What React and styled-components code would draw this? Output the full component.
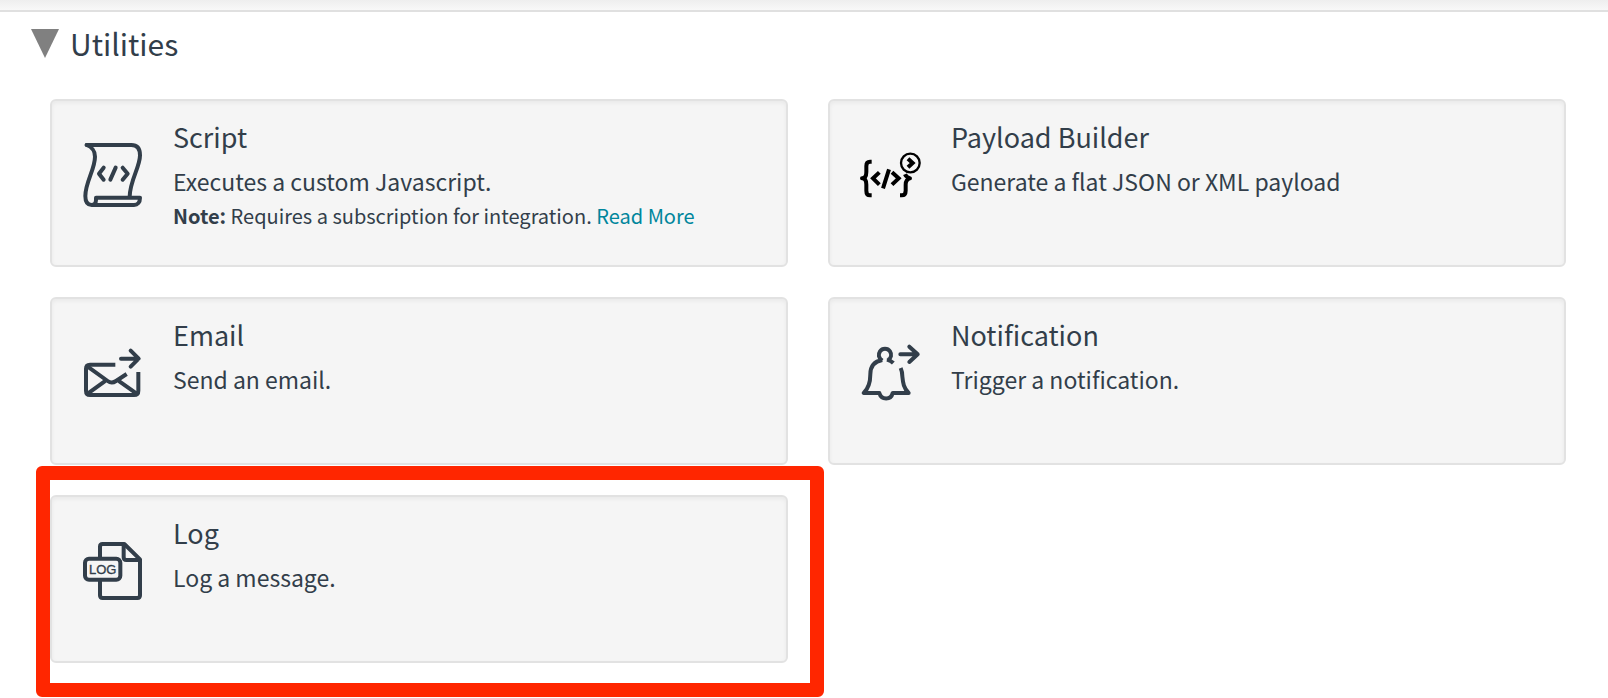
import React, { useState } from "react";
import styled, { createGlobalStyle } from "styled-components";

const ink = "#323e4a";

const GlobalStyle = createGlobalStyle`
  * { box-sizing: border-box; }
  body {
    margin: 0;
    background: #fff;
    color: ${ink};
    font-family: "Noto Sans CJK SC", "Noto Sans", sans-serif;
  }
`;

const TopBar = styled.div`
  height: 12px;
  border-bottom: 2px solid #e0e0e0;
  background: linear-gradient(#eeeeee, #f8f8f8);
`;

const Section = styled.section`
  padding: 8px 42px 0 50px;
`;

const SectionTitle = styled.h2`
  margin: 0 0 33px -19px;
  font-size: 30px;
  line-height: 46px;
  font-weight: 400;
`;

const Toggle = styled.button`
  display: flex;
  align-items: center;
  gap: 11px;
  padding: 0;
  border: 0;
  background: none;
  color: inherit;
  font: inherit;
  cursor: pointer;
`;

const Arrow = styled.svg`
  width: 28px;
  height: 29px;
  fill: #808080;
  transform: ${(p) => (p.$open ? "none" : "rotate(-90deg)")};
`;

const Grid = styled.div`
  display: grid;
  grid-template-columns: 1fr 1fr;
  gap: 30px 40px;
  padding-bottom: 35px;
`;

const Card = styled.article`
  position: relative;
  display: flex;
  gap: 23px;
  min-height: 168px;
  padding: 16px 26px;
  border: 2px solid #e2e2e2;
  border-radius: 6px;
  background: #f5f5f5;
  box-shadow: inset 0 2px 4px rgba(0, 0, 0, 0.05);
`;

const Icon = styled.svg`
  flex: none;
  width: 72px;
  height: 72px;
  margin-top: 22px;
  fill: none;
  stroke: ${(p) => p.$color || ink};
  stroke-width: 12;
  stroke-linecap: round;
  stroke-linejoin: round;
`;

const Ring = styled.circle`
  stroke-width: 7;
`;

const IconText = styled.text`
  font: 400 39px "Liberation Sans", sans-serif;
  fill: ${ink};
  stroke: ${ink};
  stroke-width: 1;
`;

const CardTitle = styled.h3`
  margin: 0 0 6px;
  font-size: 27px;
  line-height: 40px;
  font-weight: 400;
`;

const Description = styled.p`
  margin: 0;
  font-size: 23px;
  line-height: 36px;
`;

const Note = styled.p`
  margin: 0;
  font-size: 20px;
  line-height: 34px;
`;

const Link = styled.a`
  color: #00869c;
  text-decoration: none;
`;

const Highlight = styled.div`
  position: absolute;
  inset: -31px -38px -36px -16px;
  border: 14px solid #ff2600;
  border-radius: 6px;
  pointer-events: none;
`;

const ScriptIcon = () => (
  <Icon viewBox="24 27 216 216" aria-hidden="true">
    <path d="M50 45H184C202 45 210 56 210 76C210 112 180 150 179 200" />
    <path d="M50 45C66 51 75 62 75 80C75 118 46 156 46 198C46 215 52 225 65 225H192C203 225 210 217 210 203H78V210C78 218 73 225 65 225" />
    <path d="M101 113L87 131L101 149M137 113L121 149M158 113L173 131L158 149" />
  </Icon>
);

const PayloadIcon = () => (
  <Icon viewBox="18 -3 216 216" aria-hidden="true" $color="#000">
    <path
      strokeLinecap="butt"
      d="M65 65H60C52 65 49 70 49 78V96C49 108 44 115 36 115C44 115 49 122 49 134V152C49 161 52 166 60 166H65"
    />
    <path strokeLinecap="butt" strokeLinejoin="miter" d="M88 97L69 115L88 134M117 88L99 145M126 97L146 115L126 134" />
    <path strokeLinecap="butt" d="M150 166H155C164 166 167 161 167 152V134C167 123 171 117 180 115C171 112 167 108 165 103" />
    <Ring cx="181" cy="69" r="28" />
    <path strokeLinecap="butt" strokeLinejoin="miter" d="M174 56L188 69L174 82" />
  </Icon>
);

const EmailIcon = () => (
  <Icon viewBox="24 6 216 216" aria-hidden="true">
    <path
      strokeLinecap="butt"
      d="M136 89H60C52 89 48 94 48 101V167C48 175 52 180 60 180H192C200 180 205 175 205 167V111"
    />
    <path strokeLinecap="butt" d="M52 94L113 138Q125 147 138 138L170 117" />
    <path d="M53 176L104 139M200 176L148 139" />
    <path d="M153 71H205M182 47L206 71L182 95" />
  </Icon>
);

const BellIcon = () => (
  <Icon viewBox="18 6 216 216" aria-hidden="true">
    <path
      strokeLinecap="butt"
      d="M97 77C85 69 84 58 90 49C97 39 113 39 120 49C126 58 124 69 113 77M97 75C72 79 61 95 61 118C61 147 54 162 41 174H88C94 196 123 196 128 174H176C161 160 159 144 157 124C157 116 156 108 152 99M111 74C118 76 125 79 130 84"
    />
    <path d="M151 58H203M178 35L203 58L178 81" />
  </Icon>
);

const LogIcon = () => (
  <Icon viewBox="24 15 216 216" aria-hidden="true">
    <path strokeLinecap="butt" d="M90 82V50Q90 42 98 42H163L210 88V196Q210 204 202 204H98Q90 204 90 196V150" />
    <path d="M161 44V82Q161 90 169 90H208" />
    <rect x="45" y="86" width="106" height="63" rx="12" />
    <IconText x="98" y="131" textAnchor="middle">
      LOG
    </IconText>
  </Icon>
);

const utilities = [
  {
    title: "Script",
    icon: ScriptIcon,
    text: "Executes a custom Javascript.",
    note: "Requires a subscription for integration.",
  },
  { title: "Payload Builder", icon: PayloadIcon, text: "Generate a flat JSON or XML payload" },
  { title: "Email", icon: EmailIcon, text: "Send an email." },
  { title: "Notification", icon: BellIcon, text: "Trigger a notification." },
  { title: "Log", icon: LogIcon, text: "Log a message.", highlighted: true },
];

function UtilityCard({ title, icon: Glyph, text, note, highlighted }) {
  return (
    <Card>
      <Glyph />
      <div>
        <CardTitle>{title}</CardTitle>
        <Description>{text}</Description>
        {note && (
          <Note>
            <strong>Note:</strong> {note} <Link href="#read-more">Read More</Link>
          </Note>
        )}
      </div>
      {highlighted && <Highlight />}
    </Card>
  );
}

export default function App() {
  const [open, setOpen] = useState(true);
  return (
    <>
      <GlobalStyle />
      <TopBar />
      <Section>
        <SectionTitle>
          <Toggle type="button" aria-expanded={open} onClick={() => setOpen(!open)}>
            <Arrow $open={open} viewBox="0 0 28 29" aria-hidden="true">
              <path d="M0 0H28L14 29Z" />
            </Arrow>
            Utilities
          </Toggle>
        </SectionTitle>
        {open && (
          <Grid>
            {utilities.map((item) => (
              <UtilityCard key={item.title} {...item} />
            ))}
          </Grid>
        )}
      </Section>
    </>
  );
}
